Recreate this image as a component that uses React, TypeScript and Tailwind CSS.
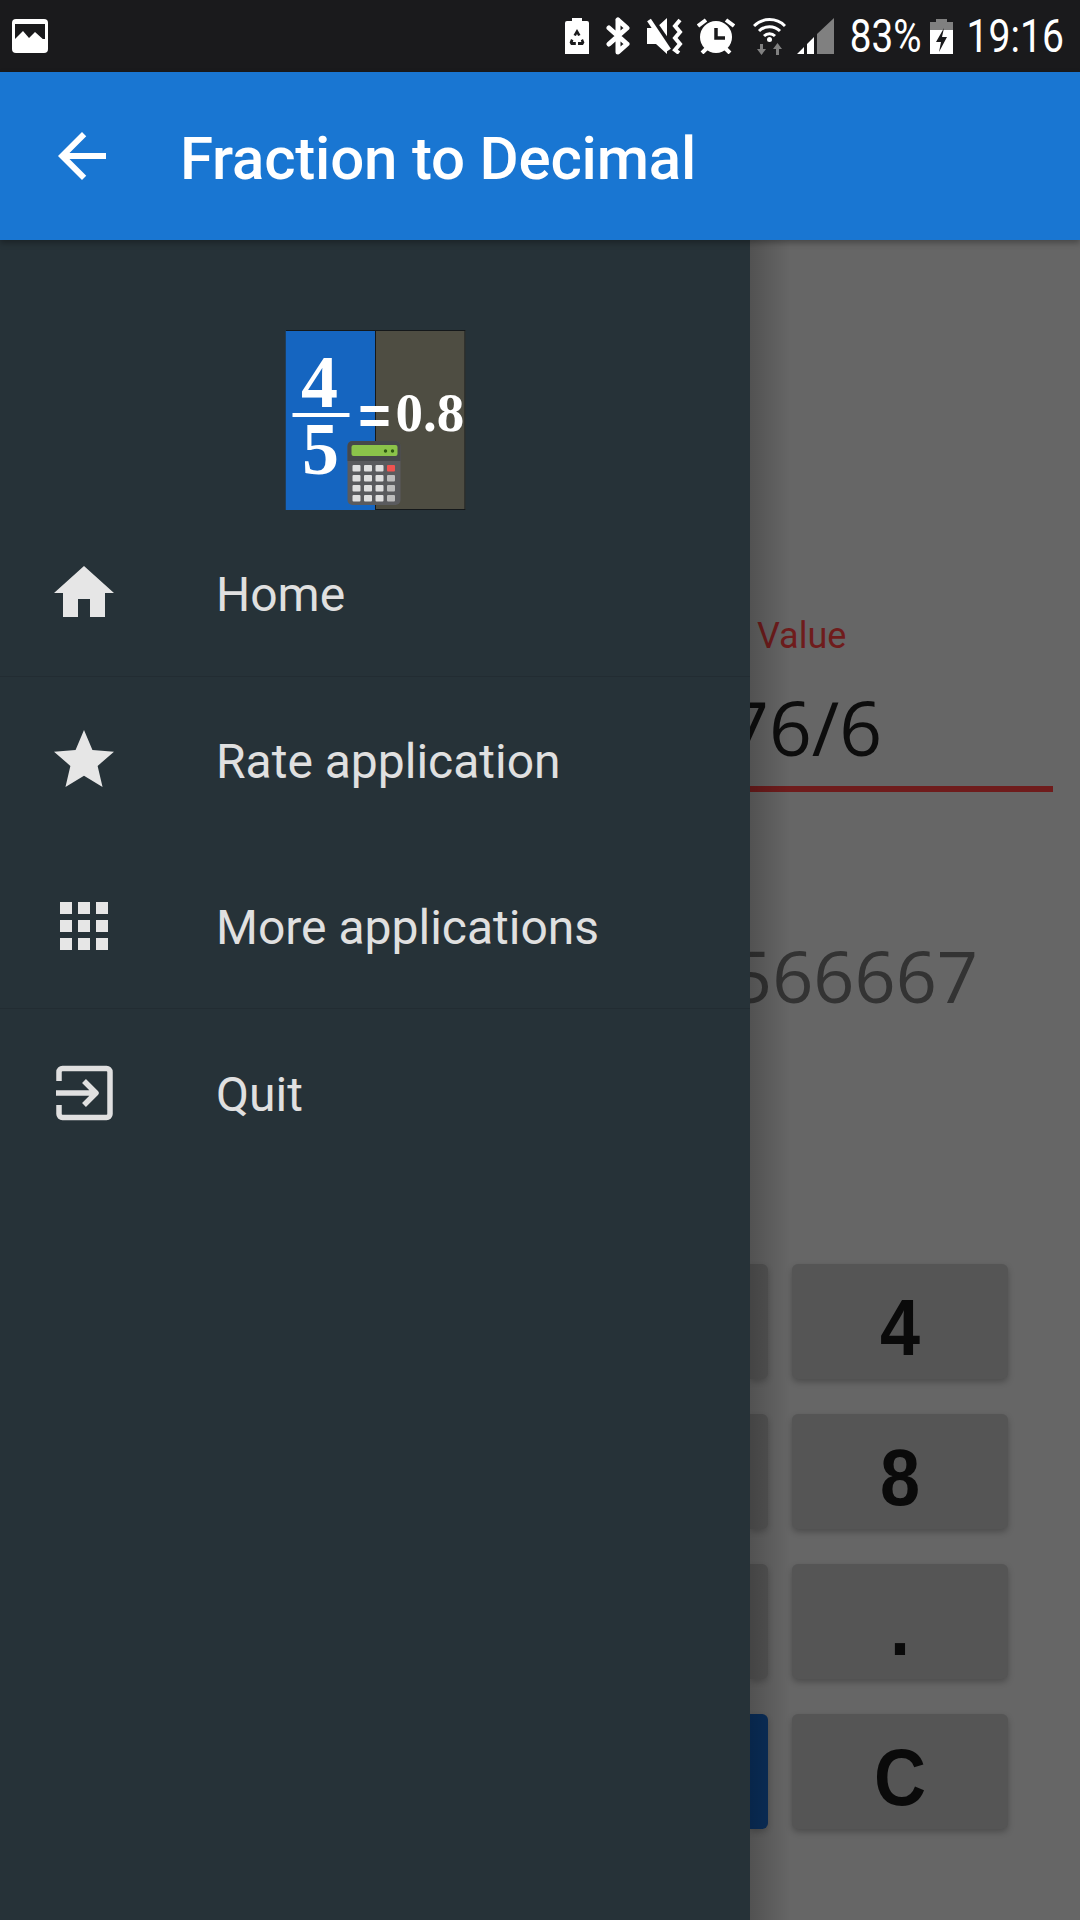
import { MdArrowBack, MdHome, MdStar, MdApps } from "react-icons/md";

function StatusIcons() {
  return (
    <div className="flex items-center">
      <svg width="24" height="36" viewBox="0 0 24 36" className="mr-[17px]">
        <path d="M2 3h5V0h10v3h5a2 2 0 0 1 2 2v31H0V5a2 2 0 0 1 2-2z" fill="#fff" />
        <path d="M12 11l3.5 6-2.4 1-1.1-2-1.1 2-2.4-1zM6 21l2.4 1.2L7.8 24h3v3H6l-1.4-2.5zM18 21l1.4 3.5L18 27h-5v-3h3.4l-.6-1.8z" fill="#1a1a1c" />
      </svg>
      <svg width="24" height="38" viewBox="0 0 24 38" className="mr-[17px]">
        <path d="M12 3v32l9-8-18-16M12 3l9 8-18 16" fill="none" stroke="#fff" strokeWidth="5" strokeLinejoin="round" strokeLinecap="round" />
      </svg>
      <svg width="38" height="36" viewBox="0 0 38 36" className="mr-[12px]">
        <path d="M0 10h9L20 0v36L9 26H0z" fill="#fff" />
        <path d="M3 0l23 33" stroke="#1a1a1c" strokeWidth="7" />
        <path d="M2 2l20 30" stroke="#fff" strokeWidth="4.5" />
        <path d="M33 2l-5 6 5 6-5 6 5 6-5 6 4 3" fill="none" stroke="#fff" strokeWidth="4" />
      </svg>
      <svg width="38" height="36" viewBox="0 0 38 36" className="mr-[18px]">
        <circle cx="19" cy="19" r="16" fill="#fff" />
        <path d="M19 10v10h9" fill="none" stroke="#1a1a1c" strokeWidth="3.5" />
        <path d="M1 8l8-6M37 8l-8-6M5 35l5-5M33 35l-5-5" stroke="#fff" strokeWidth="4" />
      </svg>
      <svg width="33" height="38" viewBox="0 0 33 38" className="mr-[11px]">
        <path d="M1 9a22 22 0 0 1 31 0M6 14a15 15 0 0 1 21 0M11 19a8 8 0 0 1 11 0" fill="none" stroke="#fff" strokeWidth="3" />
        <circle cx="16.5" cy="22.5" r="2.5" fill="#fff" />
        <path d="M10 27v5h3l-4.5 6L4 32h3v-5zM23 38v-6h-3l4.5-6 4.5 6h-3v6z" fill="#808080" />
      </svg>
      <svg width="37" height="36" viewBox="0 0 37 36" className="mr-[17px]">
        <path d="M37 0v36H20V16z" fill="#808080" />
        <path d="M0 36l7-7v7zM10 26l7-7v17h-7z" fill="#fff" />
      </svg>
      <span className="text-[46px] leading-none text-white w-[69px] flex justify-center whitespace-nowrap">
        <span className="scale-x-[0.84]">83%</span>
      </span>
      <svg width="23" height="35" viewBox="0 0 23 35" className="ml-[10px] mr-[14px]">
        <path d="M6 0h11v3h6v8H0V3h6z" fill="#808080" />
        <path d="M0 11h23v24H0z" fill="#fff" />
        <path d="M14 9L6 23h5l-2 10 8-15h-5z" fill="#1a1a1c" />
      </svg>
      <span className="text-[46px] leading-none text-white w-[96px] flex justify-center whitespace-nowrap">
        <span className="scale-x-[0.85]">19:16</span>
      </span>
    </div>
  );
}

function Logo() {
  return (
    <svg width="180" height="180" viewBox="0 0 180 180" className="translate-x-[0.5px]">
      <rect x="0" y="0" width="90" height="180" fill="#1565c0" />
      <rect x="90" y="0" width="90" height="180" fill="#4e4d42" />
      <path d="M0 .5h180M90 180v-180M90 179.5h90M179.5 0v180" stroke="#14181a" strokeWidth="1" />
      <g fontFamily="'Liberation Serif', serif" fontWeight="700" fill="#fff">
        <text x="34" y="77" textAnchor="middle" fontSize="74">4</text>
        <text x="35" y="144" textAnchor="middle" fontSize="74">5</text>
        <text x="110" y="101" fontSize="55">0.8</text>
      </g>
      <rect x="7" y="83" width="57" height="4" fill="#fff" />
      <rect x="75" y="76" width="28" height="6" fill="#fff" />
      <rect x="75" y="90" width="28" height="6" fill="#fff" />
      <rect x="62" y="111" width="53" height="64" rx="5" fill="#5a5b5e" />
      <path d="M62 131v-15a5 5 0 0 1 5-5h43a5 5 0 0 1 5 5v15z" fill="#46484a" />
      <rect x="66" y="115" width="46" height="11" rx="2" fill="#8bc34a" />
      <circle cx="100" cy="121" r="1.7" fill="#2e5a10" />
      <circle cx="107" cy="121" r="1.7" fill="#2e5a10" />
      {[0, 1, 2, 3].map((r) =>
        [0, 1, 2, 3].map((c) => (
          <rect
            key={`${r}-${c}`}
            x={67 + c * 11.5}
            y={135 + r * 10}
            width="8"
            height="6.5"
            rx="1"
            fill={r === 0 && c === 3 ? "#ef5350" : c === 3 ? "#bdbdbd" : "#e0e0e0"}
          />
        ))
      )}
    </svg>
  );
}

function Row({ icon, label, h }: { icon: React.ReactNode; label: string; h: string }) {
  return (
    <div className={`flex items-center ${h}`}>
      <div className="w-[72px] h-[72px] ml-[48px] flex items-center justify-center text-[#e6e6e6]">{icon}</div>
      <span className="ml-[96px] pt-[4px] text-[48px] leading-none text-[#e0e0e0]">{label}</span>
    </div>
  );
}

function Key({ label, stub }: { label: string; stub: string }) {
  return (
    <div className="flex gap-6">
      <div className={`w-[18px] h-[115px] rounded-r-md shadow-[0_3px_6px_rgba(0,0,0,0.2)] ${stub}`} />
      <div className="w-[216px] h-[115px] rounded-md bg-[#555555] shadow-[0_3px_6px_rgba(0,0,0,0.25)] flex items-center justify-center pt-[10px] text-[72px] leading-none font-bold text-[#0a0a0a] font-['Liberation_Sans',sans-serif]">
        <span className="scale-y-[1.1]">{label}</span>
      </div>
    </div>
  );
}

export default function App() {
  return (
    <div className="w-[1080px] h-[1920px] flex flex-col overflow-hidden bg-[#666666] font-['Roboto',sans-serif]">
      <div className="h-[72px] shrink-0 bg-[#1a1a1c] flex items-center justify-between pl-[12px] pr-[17px]">
        <svg width="36" height="34" viewBox="0 0 36 34">
          <path d="M4 0h28a4 4 0 0 1 4 4v26a4 4 0 0 1-4 4H4a4 4 0 0 1-4-4V4a4 4 0 0 1 4-4z" fill="#fff" />
          <path d="M3 5h30v15H3z" fill="#1a1a1c" />
          <path d="M3 20l8-8 6 7 6-6 10 9v3H3z" fill="#fff" />
        </svg>
        <StatusIcons />
      </div>
      <div className="relative z-20 h-[168px] shrink-0 bg-[#1976d2] flex items-center shadow-[0_3px_6px_rgba(0,0,0,0.3)]">
        <MdArrowBack className="ml-[46px] text-white" size={72} />
        <span className="ml-[62px] pt-[5px] text-[60px] tracking-[-0.2px] font-medium leading-none text-white whitespace-nowrap">Fraction to Decimal</span>
      </div>
      <div className="flex-1 flex min-h-0">
        <div className="relative z-10 w-[750px] shrink-0 bg-[#263238] flex flex-col">
          <div className="h-[270px] pt-[90px] flex justify-center">
            <Logo />
          </div>
          <Row h="h-[166px]" icon={<MdHome size={72} />} label="Home" />
          <div className="h-[1px] bg-[#222c32]" />
          <Row h="h-[166px]" icon={<MdStar size={72} />} label="Rate application" />
          <Row h="h-[165px]" icon={<MdApps size={72} />} label="More applications" />
          <div className="h-[1px] bg-[#222c32]" />
          <Row
            h="h-[168px]"
            icon={
              <svg width="72" height="72" viewBox="0 0 72 72" fill="none" stroke="#e0e0e0" strokeWidth="5.5" strokeLinejoin="round">
                <path d="M11 24V15a3.5 3.5 0 0 1 3.5-3.5h44a3.5 3.5 0 0 1 3.5 3.5v42a3.5 3.5 0 0 1-3.5 3.5h-44A3.5 3.5 0 0 1 11 57V48" />
                <path d="M8 36h40M36 24l12 12-12 12" />
              </svg>
            }
            label="Quit"
          />
        </div>
        <div className="relative flex-1 overflow-hidden flex flex-col">
          <div className="absolute inset-y-0 left-0 w-[40px] bg-gradient-to-r from-[rgba(0,0,0,0.2)] to-transparent" />
          <span className="mt-[375px] ml-[7px] text-[36px] leading-[42px] text-[#6f1c1c] whitespace-nowrap">Value</span>
          <span className="mt-[20px] ml-[-24px] text-[75px] leading-[100px] text-[#0d0d0d] whitespace-nowrap font-['Open_Sans',sans-serif]">76/6</span>
          <div className="w-[303px] h-[6px] bg-[#6f1c1c] mt-[9px]" />
          <span className="mt-[133px] ml-[-19px] text-[72px] leading-[100px] text-[#333333] whitespace-nowrap font-['Open_Sans',sans-serif]">566667</span>
          <div className="mt-[239px] flex flex-col gap-[35px]">
            <Key label="4" stub="bg-[#555555]" />
            <Key label="8" stub="bg-[#555555]" />
            <Key label="." stub="bg-[#555555]" />
            <Key label="C" stub="bg-[#0a2f5c]" />
          </div>
        </div>
      </div>
    </div>
  );
}
